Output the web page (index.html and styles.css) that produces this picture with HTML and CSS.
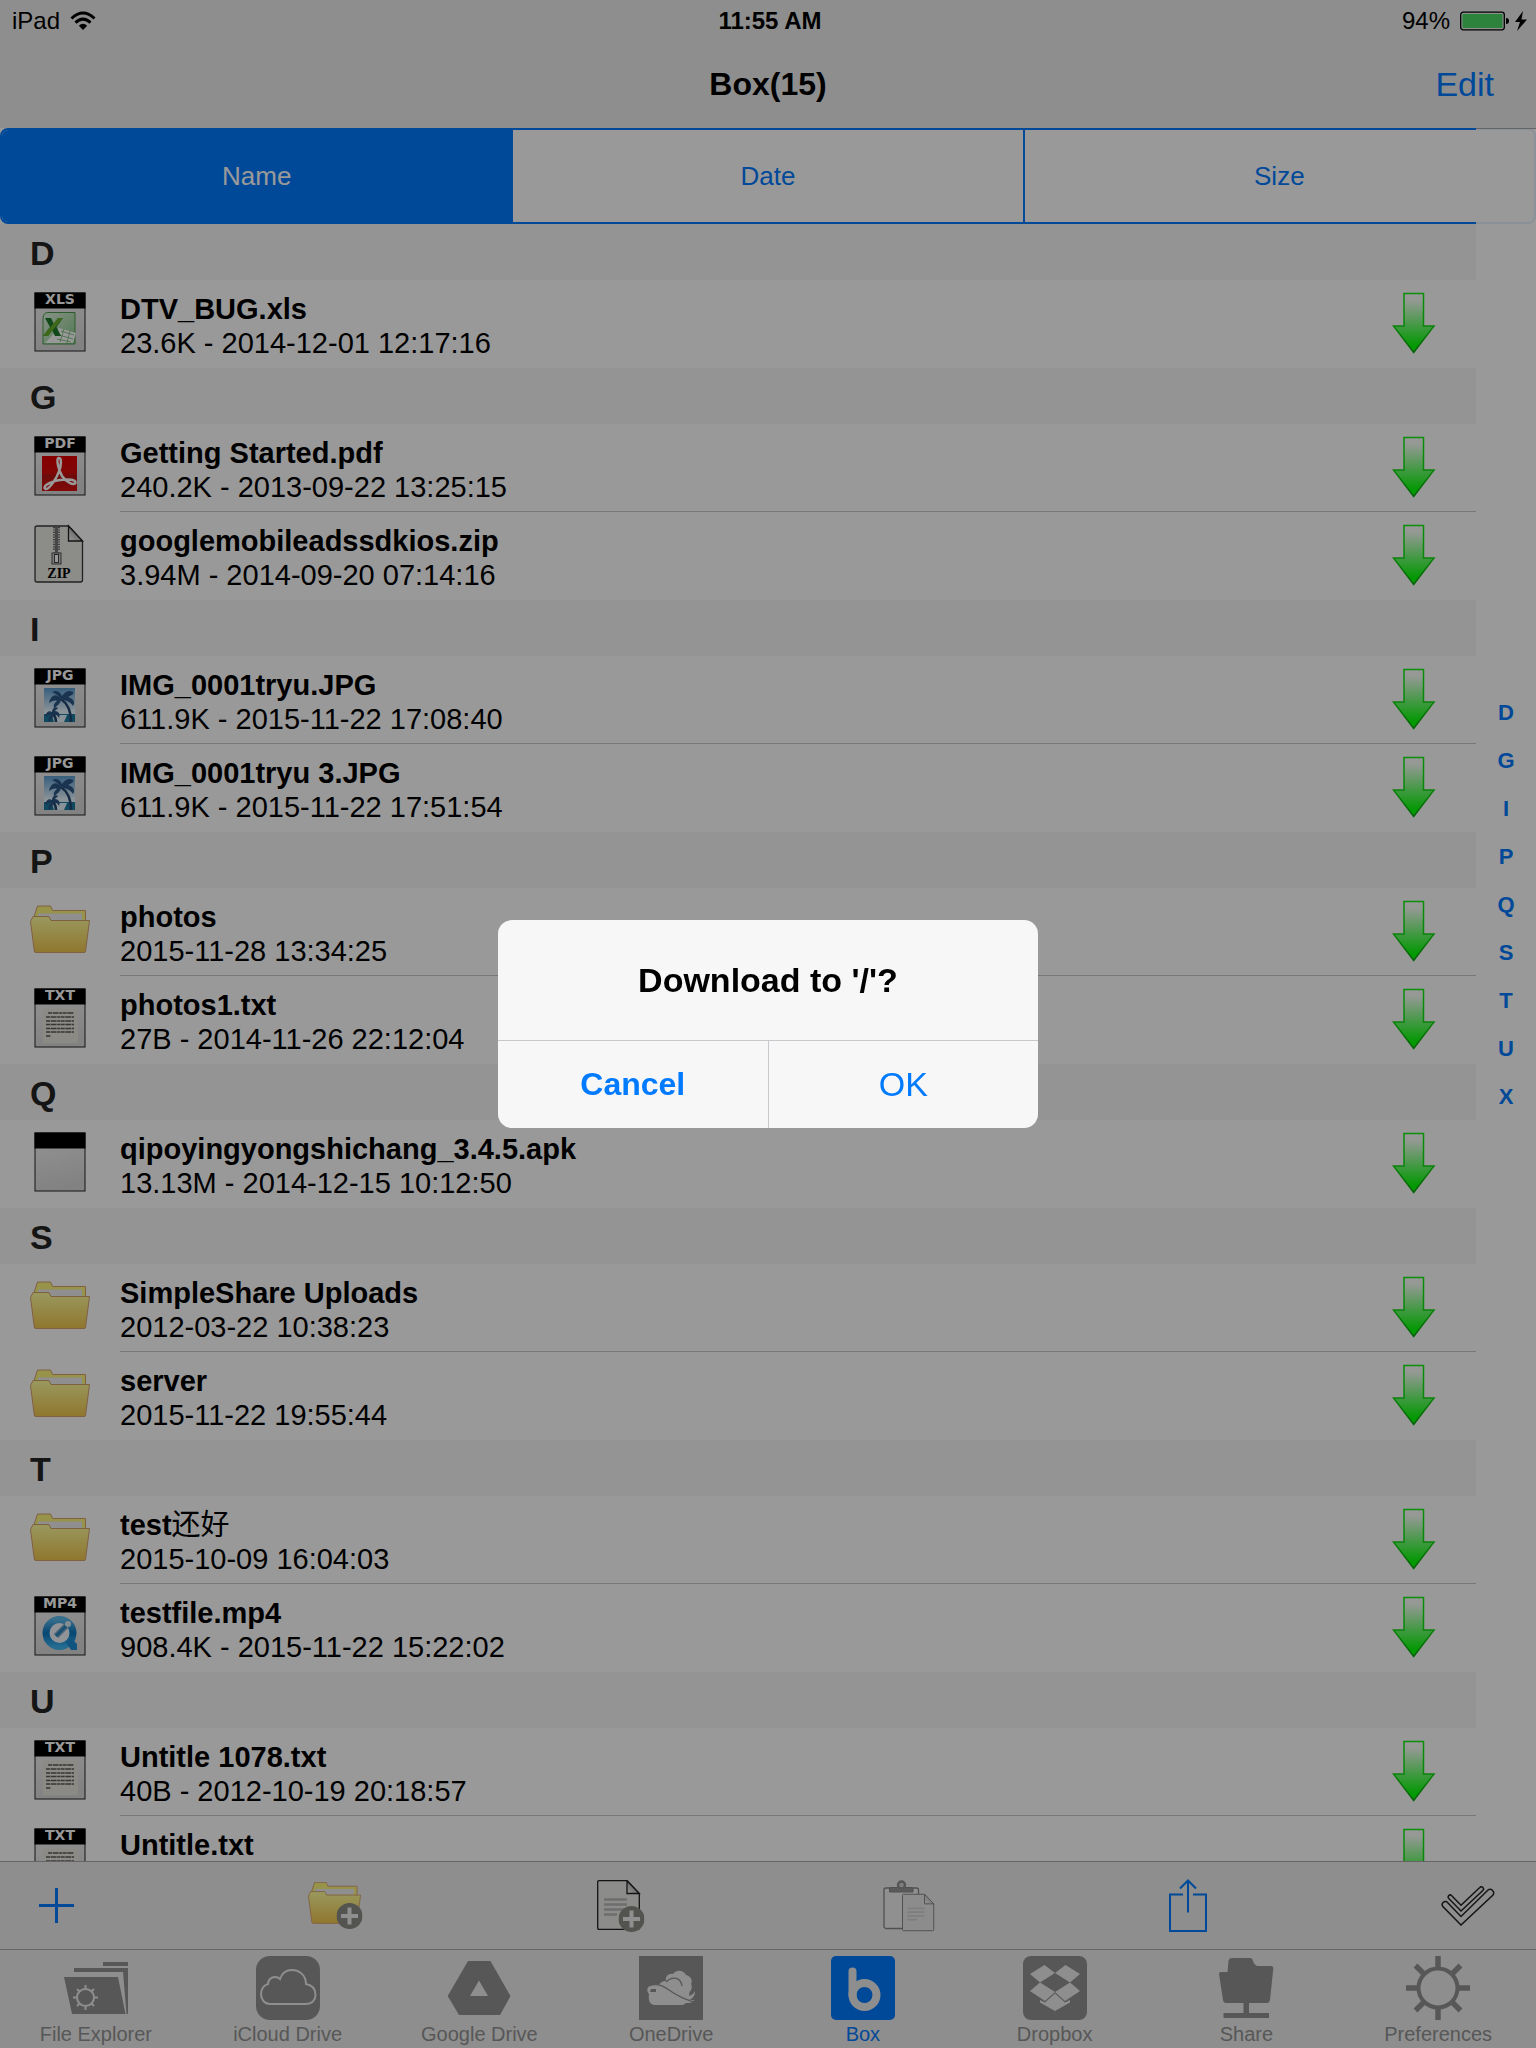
FILE: index.html
```html
<!DOCTYPE html>
<html lang="en">
<head>
	<meta charset="UTF-8">
	<meta name="viewport" content="width=device-width">
	<title>Box(15)</title>
	<link rel="stylesheet" href="styles.css">
</head>
<body>
	<!-- icon sprite -->
	<svg class="sprite" width="0" height="0" aria-hidden="true">
		<defs>
			<linearGradient id="g-arrow" x1="0" y1="0" x2="0" y2="1">
				<stop offset="0" stop-color="#fff"/>
				<stop offset=".12" stop-color="#f6fff6"/>
				<stop offset=".9" stop-color="#0f0"/>
			</linearGradient>
			<linearGradient id="g-arrow-line" x1="0" y1="0" x2="0" y2="1">
				<stop offset="0" stop-color="#10f010"/>
				<stop offset=".5" stop-color="#10e010"/>
				<stop offset="1" stop-color="#10a010"/>
			</linearGradient>
			<linearGradient id="g-paper" x1="0" y1="0" x2=".2" y2="1">
				<stop offset="0" stop-color="#f6f6f6"/>
				<stop offset="1" stop-color="#d9d9d9"/>
			</linearGradient>
			<linearGradient id="g-folder" x1="0" y1="0" x2="0" y2="1">
				<stop offset="0" stop-color="#ffff9c"/>
				<stop offset="1" stop-color="#f0c64e"/>
			</linearGradient>
			<linearGradient id="g-fold" x1="0" y1="1" x2="1" y2="0">
				<stop offset="0" stop-color="#fff"/>
				<stop offset="1" stop-color="#777"/>
			</linearGradient>
			<linearGradient id="g-sky" x1="0" y1="0" x2="0" y2="1">
				<stop offset="0" stop-color="#5c9cd0"/>
				<stop offset=".7" stop-color="#eaf7ff"/>
			</linearGradient>
			<linearGradient id="g-red" x1="0" y1="0" x2="0" y2="1">
				<stop offset="0" stop-color="#e00000"/>
				<stop offset=".5" stop-color="#d60c0c"/>
				<stop offset=".55" stop-color="#b41414"/>
				<stop offset="1" stop-color="#d81010"/>
			</linearGradient>
			<linearGradient id="g-qt" x1="0" y1="0" x2="0" y2="1">
				<stop offset="0" stop-color="#5cb8ea"/>
				<stop offset=".5" stop-color="#0a76c0"/>
				<stop offset="1" stop-color="#3cb4f0"/>
			</linearGradient>
			<linearGradient id="g-xls" x1="0" y1="0" x2="1" y2="1">
				<stop offset="0" stop-color="#e4f4e4"/>
				<stop offset="1" stop-color="#86c886"/>
			</linearGradient>
		</defs>
		<symbol id="down" viewBox="0 0 44 62">
			<path d="M12 1.500H31.500V34H42L21.700 60.500L1.500 34H12Z" fill="url(#g-arrow)" stroke="url(#g-arrow-line)" stroke-width="1.500"/>
		</symbol>
		<symbol id="blank" viewBox="0 0 60 60">
			<rect x="5" y="1" width="50" height="58" fill="url(#g-paper)" stroke="#222"/>
			<rect x="4.500" y=".5" width="51" height="16" fill="#000"/>
		</symbol>
		<symbol id="xls" viewBox="0 0 60 60">
			<use href="#blank"/>
			<path d="M18 20.500H45V52H13V27Q13 20.500 18 20.500Z" fill="url(#g-xls)" stroke="#4a9a4a"/>
			<path d="M29 36L46 41L43 51L15 51Z" fill="#fff"/>
			<path d="M31 39l13 4M29 43l14 4M27 47l14 3M34 37l-4 13M40 39l-3 12" stroke="#8cc48c" fill="none"/>
			<path d="M15 26H21L24 32L28 26H33L26.500 35L31 44H25L22 38L18 44H13L20 35Z" fill="#1e7a2c"/>
			<path d="M28 26H33L18 44H13Z" fill="#6ab02c"/>
		</symbol>
		<symbol id="pdf" viewBox="0 0 60 60">
			<use href="#blank"/>
			<rect x="12" y="20" width="35" height="35" fill="url(#g-red)"/>
			<path d="M28.500 22C32 21 31 30 29.500 34C27 42 19 54 15.500 53C12 51 18 46 30 44C40 42.500 46 44 45.500 47C44 50 36 46 32 40C28.500 34 26 23 28.500 22Z" fill="none" stroke="#fff" stroke-width="2.500"/>
		</symbol>
		<symbol id="jpg" viewBox="0 0 60 60">
			<use href="#blank"/>
			<rect x="14" y="20" width="31" height="34" fill="url(#g-sky)"/>
			<path d="M14 46H45V54H14Z" fill="#1c78a0"/>
			<path d="M22 47H37L34 54H24Z" fill="#e6f6fc"/>
			<path d="M31 31C37 35 41 42 41 54M23 46C25 48 26 51 26 54" fill="none" stroke="#24486e" stroke-width="2.500"/>
			<path d="M31 31C25 23 20 29 19 35C22 33 24 32 27 33C24 35 23 38 24 40C27 38 30 36 31 32C35 32 40 33 43 38C46 33 42 30 38 29C42 27 44 26 43 24C38 21 34 25 32 28C30 23 26 22 22 24C26 26 29 28 31 31Z" fill="#2c5684"/>
			<path d="M22 44C18 42 16 45 15 49C18 47 20 47 21 47C18 50 18 52 19 54C22 52 23 49 23 46C26 46 28 48 29 50C31 46 28 43 25 43C26 41 28 41 28 40C25 38 22 41 22 44Z" fill="#2c5684"/>
		</symbol>
		<symbol id="mp4" viewBox="0 0 60 60">
			<use href="#blank"/>
			<circle cx="29.500" cy="37" r="13.500" fill="#f2f6fa" stroke="url(#g-qt)" stroke-width="7"/>
			<path d="M36 46L41 42L47 48V54H41Z" fill="#1c8cd4"/>
			<path d="M26 40L37 29" stroke="#7aa8c8" stroke-width="6" fill="none"/>
			<path d="M26 40L38 28" stroke="#2a86bc" stroke-width="3" fill="none"/>
			<circle cx="38" cy="28" r="3" fill="#dcecf6"/>
		</symbol>
		<symbol id="txt" viewBox="0 0 60 60">
			<use href="#blank"/>
			<rect x="13" y="21" width="35" height="34" fill="#e8e6de"/>
			<path d="M18 25H44M16 29H44M16 33H44M16 36.500H44M16 40.500H44M16 44H44M16 48H21" stroke="#5a5a58" stroke-width="1.400" stroke-dasharray="4 .6 6 .6 3 .5" fill="none"/>
		</symbol>
		<symbol id="zip" viewBox="0 0 60 60">
			<path d="M5 4Q5 2 7 2H38.500L52.500 17V56Q52.500 58 50.500 58H7Q5 58 5 56Z" fill="#e9e9e5" stroke="#3a3a3a" stroke-width="1.300"/>
			<path d="M38.500 2V17H52.500Z" fill="url(#g-fold)" stroke="#222" stroke-width="1.300"/>
			<path d="M26.500 3V27" stroke="#666" stroke-width="7" stroke-dasharray="1.200 1.200"/>
			<path d="M26.500 3V28" stroke="#777" stroke-width="3"/>
			<path d="M23.500 28H29.500L31.500 40H21.500Z" fill="#999"/>
			<rect x="22" y="29" width="9" height="11" fill="#ccc" stroke="#555"/>
			<rect x="24.500" y="30.500" width="4" height="8" fill="#fff" stroke="#444"/>
		</symbol>
		<symbol id="folder" viewBox="0 0 60 60">
			<path d="M3 20L7.500 6H20.500L22.700 10.500H55.500V22H3Z" fill="#fdf57c" stroke="#d6a070"/>
			<path d="M8 13.500H52V20H8Z" fill="#eee"/>
			<path d="M.5 21.500L3 16.500H19L21 20.500H59.500L55.500 51.500Q55.300 52.500 54 52.500H6Q4.500 52.500 4.300 51Z" fill="url(#g-folder)" stroke="#d6a070"/>
		</symbol>
		<symbol id="badge" viewBox="0 0 26 26">
			<circle cx="13" cy="13" r="13" fill="#8a8a86"/>
			<path d="M13 4.500V21.500M4.500 13H21.500" stroke="#eee" stroke-width="4"/>
		</symbol>
		<symbol id="page" viewBox="0 0 44 50">
			<path d="M.7 2Q.7 .7 2 .7H30L42.300 13.500V48Q42.300 49.300 41 49.300H2Q.7 49.300 .7 48Z" fill="#e9e9e7" stroke="#222" stroke-width="1.300"/>
			<path d="M30 .7V13.500H42.300Z" fill="url(#g-fold)" stroke="#222" stroke-width="1.300"/>
			<path d="M7 19.500H30M7 24.500H30M7 29.500H30M7 34.500H20" stroke="#b8b8b8" stroke-width="2.600"/>
		</symbol>
	</svg>

	<div class="screen">
		<header class="top">
			<div class="status">
				<div class="status-left">
					<span>iPad</span>
					<svg width="26" height="20" viewBox="0 0 26 20" fill="none" stroke="#000" stroke-width="3"><path d="M1.500 7.500Q13 -3.500 24.500 7.500M5.500 11.700Q13 4.500 20.500 11.700"/><path d="M13 19L8.800 14.700Q13 11 17.200 14.700Z" fill="#000" stroke="none"/></svg>
				</div>
				<span class="clock">11:55 AM</span>
				<div class="status-right">
					<span>94%</span>
					<svg width="68" height="20" viewBox="0 0 68 20"><rect x=".7" y="1.200" width="43.600" height="17.600" rx="2.500" fill="none" stroke="#000" stroke-width="1.300"/><rect x="2.500" y="3" width="40" height="14" fill="#4cd964"/><path d="M46 7Q49 7 49 10Q49 13 46 13Z"/><path d="M63 0L55 11H60L57 20L67 8.500H61.500Z"/></svg>
				</div>
			</div>
			<div class="nav">
				<h1>Box(15)</h1>
				<button class="edit" type="button">Edit</button>
			</div>
		</header>

		<main class="list">
			<div class="segments">
				<button class="on" type="button">Name</button>
				<button type="button">Date</button>
				<button type="button">Size</button>
			</div>

			<h2>D</h2>
			<ul>
				<li>
					<svg class="icon" viewBox="0 0 60 60"><use href="#xls"/><text class="ext" x="30" y="12">XLS</text></svg>
					<div class="file"><strong>DTV_BUG.xls</strong><span>23.6K - 2014-12-01 12:17:16</span></div>
					<button type="button" aria-label="Download"><svg><use href="#down"/></svg></button>
				</li>
			</ul>

			<h2>G</h2>
			<ul>
				<li>
					<svg class="icon" viewBox="0 0 60 60"><use href="#pdf"/><text class="ext" x="30" y="12">PDF</text></svg>
					<div class="file"><strong>Getting Started.pdf</strong><span>240.2K - 2013-09-22 13:25:15</span></div>
					<button type="button" aria-label="Download"><svg><use href="#down"/></svg></button>
				</li>
				<li>
					<svg class="icon" viewBox="0 0 60 60"><use href="#zip"/><text class="zip-text" x="29" y="54">ZIP</text></svg>
					<div class="file"><strong>googlemobileadssdkios.zip</strong><span>3.94M - 2014-09-20 07:14:16</span></div>
					<button type="button" aria-label="Download"><svg><use href="#down"/></svg></button>
				</li>
			</ul>

			<h2>I</h2>
			<ul>
				<li>
					<svg class="icon" viewBox="0 0 60 60"><use href="#jpg"/><text class="ext" x="30" y="12">JPG</text></svg>
					<div class="file"><strong>IMG_0001tryu.JPG</strong><span>611.9K - 2015-11-22 17:08:40</span></div>
					<button type="button" aria-label="Download"><svg><use href="#down"/></svg></button>
				</li>
				<li>
					<svg class="icon" viewBox="0 0 60 60"><use href="#jpg"/><text class="ext" x="30" y="12">JPG</text></svg>
					<div class="file"><strong>IMG_0001tryu 3.JPG</strong><span>611.9K - 2015-11-22 17:51:54</span></div>
					<button type="button" aria-label="Download"><svg><use href="#down"/></svg></button>
				</li>
			</ul>

			<h2>P</h2>
			<ul>
				<li>
					<svg class="icon"><use href="#folder"/></svg>
					<div class="file"><strong>photos</strong><span>2015-11-28 13:34:25</span></div>
					<button type="button" aria-label="Download"><svg><use href="#down"/></svg></button>
				</li>
				<li>
					<svg class="icon" viewBox="0 0 60 60"><use href="#txt"/><text class="ext" x="30" y="12">TXT</text></svg>
					<div class="file"><strong>photos1.txt</strong><span>27B - 2014-11-26 22:12:04</span></div>
					<button type="button" aria-label="Download"><svg><use href="#down"/></svg></button>
				</li>
			</ul>

			<h2>Q</h2>
			<ul>
				<li>
					<svg class="icon"><use href="#blank"/></svg>
					<div class="file"><strong>qipoyingyongshichang_3.4.5.apk</strong><span>13.13M - 2014-12-15 10:12:50</span></div>
					<button type="button" aria-label="Download"><svg><use href="#down"/></svg></button>
				</li>
			</ul>

			<h2>S</h2>
			<ul>
				<li>
					<svg class="icon"><use href="#folder"/></svg>
					<div class="file"><strong>SimpleShare Uploads</strong><span>2012-03-22 10:38:23</span></div>
					<button type="button" aria-label="Download"><svg><use href="#down"/></svg></button>
				</li>
				<li>
					<svg class="icon"><use href="#folder"/></svg>
					<div class="file"><strong>server</strong><span>2015-11-22 19:55:44</span></div>
					<button type="button" aria-label="Download"><svg><use href="#down"/></svg></button>
				</li>
			</ul>

			<h2>T</h2>
			<ul>
				<li>
					<svg class="icon"><use href="#folder"/></svg>
					<div class="file"><strong>test<i lang="zh">还好</i></strong><span>2015-10-09 16:04:03</span></div>
					<button type="button" aria-label="Download"><svg><use href="#down"/></svg></button>
				</li>
				<li>
					<svg class="icon" viewBox="0 0 60 60"><use href="#mp4"/><text class="ext" x="30" y="12">MP4</text></svg>
					<div class="file"><strong>testfile.mp4</strong><span>908.4K - 2015-11-22 15:22:02</span></div>
					<button type="button" aria-label="Download"><svg><use href="#down"/></svg></button>
				</li>
			</ul>

			<h2>U</h2>
			<ul>
				<li>
					<svg class="icon" viewBox="0 0 60 60"><use href="#txt"/><text class="ext" x="30" y="12">TXT</text></svg>
					<div class="file"><strong>Untitle 1078.txt</strong><span>40B - 2012-10-19 20:18:57</span></div>
					<button type="button" aria-label="Download"><svg><use href="#down"/></svg></button>
				</li>
				<li>
					<svg class="icon" viewBox="0 0 60 60"><use href="#txt"/><text class="ext" x="30" y="12">TXT</text></svg>
					<div class="file"><strong>Untitle.txt</strong></div>
					<button type="button" aria-label="Download"><svg><use href="#down"/></svg></button>
				</li>
			</ul>

			<!-- A-Z index, lies over the right edge of the table -->
			<nav class="index">
				<a href="#">D</a>
				<a href="#">G</a>
				<a href="#">I</a>
				<a href="#">P</a>
				<a href="#">Q</a>
				<a href="#">S</a>
				<a href="#">T</a>
				<a href="#">U</a>
				<a href="#">X</a>
			</nav>
		</main>

		<div class="toolbar">
			<button type="button" aria-label="Add"><svg width="35" height="35"><path d="M17.500 0V35M0 17.500H35" stroke="#007aff" stroke-width="3"/></svg></button>
			<button type="button" aria-label="New folder"><svg width="55" height="48"><use href="#folder" x="0" y="-5" width="53" height="53"/><use href="#badge" x="28.500" y="21" width="26" height="26"/></svg></button>
			<button type="button" aria-label="New file"><svg width="52" height="52"><use href="#page" width="44" height="50"/><use href="#badge" x="21.500" y="26" width="26" height="26"/></svg></button>
			<button type="button" aria-label="Paste" disabled>
				<svg width="52" height="52" opacity=".5">
					<rect x="1" y="8" width="34.500" height="40.500" rx="2" fill="#f4f4f4" stroke="#222" stroke-width="1.300"/>
					<path d="M6.500 12V9Q6.500 7.500 9 7.500H27Q30 7.500 30 9V12Z" fill="#444" stroke="#222"/>
					<circle cx="18.500" cy="5" r="3.500" fill="#bbb" stroke="#333" stroke-width="2.500"/>
					<use href="#page" x="19" y="13" width="33" height="39"/>
				</svg>
			</button>
			<button type="button" aria-label="Send"><svg width="38" height="53" fill="none" stroke="#007aff" stroke-width="2"><path d="M14 15.500H1V52H37V15.500H24M19 1V33.500M11 9.500L19 1.500L27 9.500"/></svg></button>
			<button type="button" aria-label="Select all"><svg width="54" height="40" fill="none" stroke="#222" stroke-width="1.500"><path d="M5.800 15.800L20 30.500L47 4A3.600 3.600 0 0 1 52 9L20 39L1.600 20.200A3.200 3.200 0 0 1 5.800 15.800Z"/><path d="M10.500 9.500L20 19.300L38.800 1.500A2 2 0 0 1 41.800 4.500L20 25L7.800 12.500A2 2 0 0 1 10.500 9.500Z"/></svg></button>
		</div>

		<nav class="tabs">
			<a href="#">
				<svg viewBox="0 0 64 64"><path d="M39 6H64V10H39ZM10 12H64V58H62.500L59 16H10ZM0 21H54L61.500 58H8Z"/><g class="cut-line"><circle cx="21.500" cy="41.500" r="8.500"/><path d="M21.500 29V33M21.500 50V54M9 41.500H13M30 41.500H34M13 33L15.500 35.500M27.500 47.500L30 50M13 50L15.500 47.500M27.500 35.500L30 33"/></g></svg>
				<span>File Explorer</span>
			</a>
			<a href="#">
				<svg viewBox="0 0 64 64"><rect width="64" height="64" rx="14"/><path class="cut-line" d="M14 48C8 48 5 43 5 38C5 33 8 29 12 28C12 24 15 21 19 21C21 21 23 22 24 23C26 17 30 14 36 14C43 14 50 19 50 28C56 29 59.500 33 59.500 39C59.500 44 56 48 50 48Z"/></svg>
				<span>iCloud Drive</span>
			</a>
			<a href="#">
				<svg viewBox="0 0 64 64"><path fill-rule="evenodd" d="M21 5H43.500L63.500 40L53 59H12L.7 40ZM32 24.500L41 40H23Z"/></svg>
				<span>Google Drive</span>
			</a>
			<a href="#">
				<svg viewBox="0 0 64 64"><rect width="64" height="64"/><path class="cut" d="M27 25C26 20 30 17 34 18C36 14 44 13 47 19C52 20 54 25 52 28C54 31 52 36 49 37L40 30Z"/><path class="cut" d="M10 38C7 35 8 29 14 29C16 28 18 28 20 29C22 25 27 24 29 26C34 20 41 22 43 29C48 29 52 34 50 40C53 39 54 38 56 35C56 40 53 43 50 44H55C54 47 50 47 47 47L44 49H16C11 49 9 45 10 38Z"/><path d="M27 26C34 19 42 22 43 30M10 30Q19 26 30 34T55 46" fill="none" stroke="#929292" stroke-width="1.300"/><path d="M12 33H17V36H11Z"/></svg>
				<span>OneDrive</span>
			</a>
			<a class="current" href="#">
				<svg viewBox="0 0 64 64"><rect width="64" height="64" rx="5"/><path d="M21.500 15.500V39" fill="none" stroke="#ededed" stroke-width="8" stroke-linecap="round"/><circle cx="33.500" cy="39" r="12" fill="none" stroke="#ededed" stroke-width="8"/></svg>
				<span>Box</span>
			</a>
			<a href="#">
				<svg viewBox="0 0 64 64"><rect width="64" height="64" rx="8"/><path class="cut" d="M7 18L21.500 9L32 17L17 26.500ZM57 18L42.500 9L32 17L47 26.500ZM17 26.500L32 36L22 45L7 35ZM47 26.500L32 36L42 45L57 35ZM17 44L22 46.500L32 37.500L42 46.500L47 44V46.500L32 55L17 46.500Z"/></svg>
				<span>Dropbox</span>
			</a>
			<a href="#">
				<svg viewBox="0 0 64 64"><path d="M5 18Q5 16 7 16H13.500L14.500 5Q15 2 18 2H36Q38.500 2 39 5T43 10H57Q59.500 10 59.300 12.500L56 44Q55.500 47 53 47H12Q9.500 47 9 44ZM29.500 47H35V57H55V62H9.500V57H29.500Z"/></svg>
				<span>Share</span>
			</a>
			<a href="#">
				<svg viewBox="0 0 64 64"><g fill="none" stroke="#929292"><circle cx="32" cy="32" r="19.500" stroke-width="4"/><path stroke-width="5.500" d="M32 0V12M32 52V64M0 32H12M52 32H64M9.500 9.500L18 18M46 46L54.500 54.500M9.500 54.500L18 46M46 18L54.500 9.500"/></g></svg>
				<span>Preferences</span>
			</a>
		</nav>
	</div>

	<div class="shade">
		<div class="alert" role="alertdialog" aria-labelledby="alert-title">
			<p id="alert-title">Download to '/'?</p>
			<div class="alert-buttons">
				<button class="cancel" type="button">Cancel</button>
				<button type="button">OK</button>
			</div>
		</div>
	</div>
</body>
</html>
```
FILE: styles.css
```css
*{margin:0;padding:0;box-sizing:border-box;}
body{
	font-family: "Helvetica Neue","Liberation Sans","Noto Sans CJK SC",sans-serif;
	color: #000;
	background: #fff;
}
button{
	border: 0;
	background: none;
	font: inherit;
	color: #007aff;
}
a{color: inherit;text-decoration: none;}
svg{display: block;}
.sprite{position: absolute;}
.screen{
	display: flex;
	flex-direction: column;
	height: 100vh;
	overflow: hidden;
}

/* status bar + title */
.top{
	background: #ededed;
	height: 128px;
	flex: none;
}
.status{
	display: grid;
	grid-template-columns: 1fr auto 1fr;
	align-items: center;
	height: 40px;
	padding: 2px 8px 0 12px;
	font-size: 24px;
}
.status-left,.status-right{
	display: flex;
	align-items: center;
	gap: 10px;
}
.status-right{justify-content: flex-end;}
.clock{font-weight: bold;}
.nav{
	display: grid;
	grid-template-columns: 1fr auto 1fr;
	align-items: center;
	height: 88px;
	padding: 0 42px;
}
.nav h1{
	grid-column: 2;
	font-size: 32px;
}
.edit{
	justify-self: end;
	font-size: 34px;
}

/* file list */
.list{
	position: relative;
	flex: 1;
	min-height: 0;
	overflow: hidden;
}
.segments{
	display: flex;
	height: 96px;
	border: 2px solid #007aff;
	border-radius: 8px;
	overflow: hidden;
}
.segments button{
	flex: 1;
	font-size: 26px;
	border-right: 2px solid #007aff;
}
.segments button:last-child{border-right: 0;}
.segments .on{
	background: #007aff;
	color: #fff;
}
.list h2{
	height: 56px;
	padding: 2px 30px 0;
	line-height: 54px;
	font-size: 34px;
	color: #232323;
	background: #f7f7f7;
}
.list ul{list-style: none;}
.list li{
	display: flex;
	align-items: flex-start;
	height: 88px;
	padding: 12px 100px 0 30px;
	position: relative;
}
/* separator starts under the text, stops at the index */
.list li + li::before{
	content: "";
	position: absolute;
	left: 120px;
	right: 60px;
	top: -1px;
	height: 1px;
	background: #c8c7cc;
}
.icon{
	width: 60px;
	height: 60px;
}
.ext{
	font-family: "DejaVu Sans",sans-serif;
	font-size: 14px;
	font-weight: bold;
	fill: #fff;
	text-anchor: middle;
}
.zip-text{
	font-family: "Liberation Serif",serif;
	font-size: 14px;
	font-weight: bold;
	text-anchor: middle;
}
.file{
	flex: 1;
	padding-left: 30px;
	font-size: 29px;
	line-height: 34px;
}
.file strong,.file span{
	display: block;
	height: 34px;
}
.file i{
	font-style: normal;
	font-weight: normal;
}
.list li button svg{
	width: 44px;
	height: 62px;
}

.index{
	position: absolute;
	top: 0;
	right: 0;
	bottom: 0;
	width: 60px;
	padding-top: 560px;
	background: rgba(255,255,255,.9);
	border-top: 1px solid #a8a8a8;
	color: #007aff;
	font-size: 22px;
	font-weight: bold;
	text-align: center;
}
.index a{
	display: block;
	line-height: 48px;
}

/* bottom bars */
.toolbar{
	flex: none;
	display: flex;
	justify-content: space-between;
	align-items: center;
	height: 88px;
	padding: 0 41px 0 39px;
	background: #ededed;
	border-top: 1px solid #a8a8a8;
}
.tabs{
	flex: none;
	display: flex;
	height: 99px;
	padding-right: 2px;
	background: #ededed;
	border-top: 1px solid #a8a8a8;
	color: #929292;
}
.tabs a{
	flex: 1;
	display: flex;
	flex-direction: column;
	align-items: center;
	padding-top: 6px;
	font-size: 20px;
	line-height: 28px;
}
.tabs svg{
	width: 64px;
	height: 64px;
	fill: currentColor;
}
.tabs .cut{fill: #ededed;}
.tabs .cut-line{
	fill: none;
	stroke: #ededed;
	stroke-width: 2;
}
.tabs .current{color: #007aff;}

/* alert */
.shade{
	position: fixed;
	top: 0;
	left: 0;
	width: 100%;
	height: 100%;
	display: flex;
	justify-content: center;
	align-items: center;
	background: rgba(0,0,0,.4);
}
.alert{
	width: 540px;
	border-radius: 14px;
	background: #f7f7f7;
	overflow: hidden;
	font-size: 34px;
}
.alert p{
	height: 120px;
	line-height: 120px;
	font-weight: bold;
	text-align: center;
}
.alert-buttons{
	display: flex;
	height: 88px;
	border-top: 1px solid #c8c8cc;
}
.alert-buttons button{flex: 1;}
.alert-buttons button + button{border-left: 1px solid #c8c8cc;}
.alert-buttons .cancel{
	font-size: 32px;
	font-weight: bold;
}
```
